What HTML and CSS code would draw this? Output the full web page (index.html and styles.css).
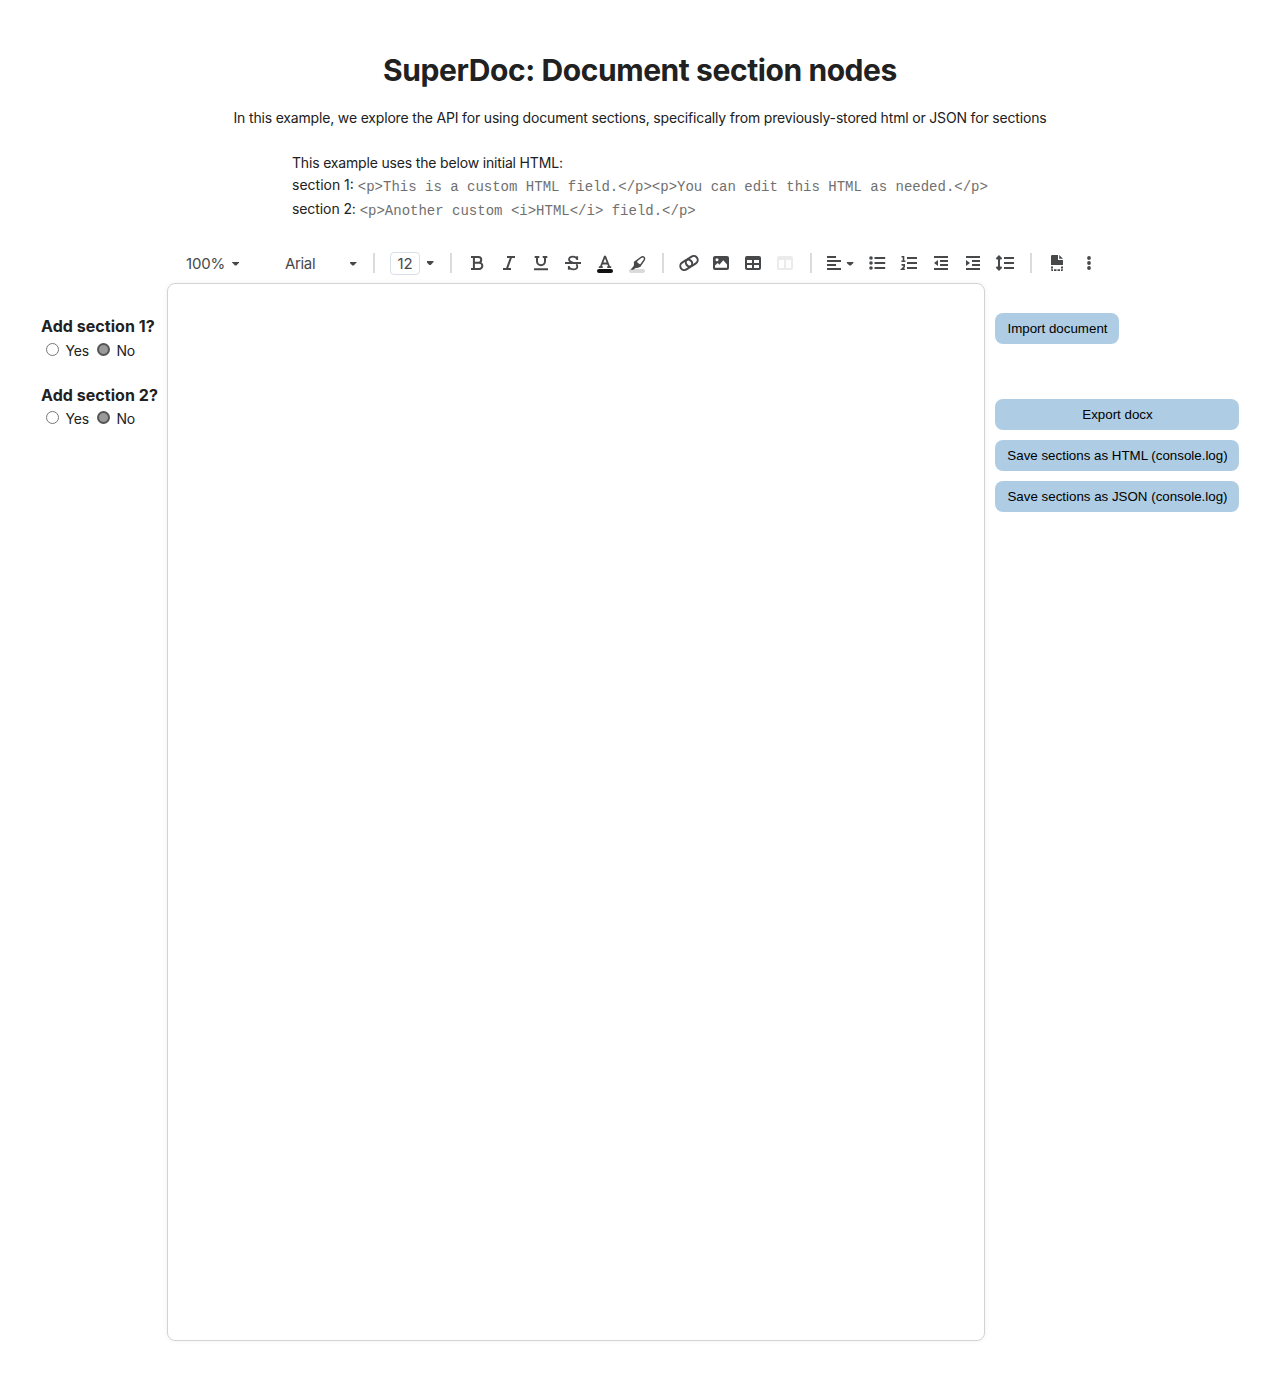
FILE: index.html
```html
<!DOCTYPE html>
<html lang="en">
<head>
<meta charset="utf-8">
<title>SuperDoc: Document section nodes</title>
<link rel="stylesheet" href="styles.css">
</head>
<body>
<header class="intro">
  <h1><span>SuperDoc: Document section nodes</span></h1>
  <p class="lead"><span>In this example, we explore the API for using document sections, specifically from previously-stored html or JSON for sections</span></p>
  <div class="sample">
    <div class="sample-line first">This example uses the below initial HTML:</div>
    <div class="sample-line">section 1: <code>&lt;p&gt;This is a custom HTML field.&lt;/p&gt;&lt;p&gt;You can edit this HTML as needed.&lt;/p&gt;</code></div>
    <div class="sample-line second">section 2: <code>&lt;p&gt;Another custom &lt;i&gt;HTML&lt;/i&gt; field.&lt;/p&gt;</code></div>
  </div>
</header>

<div class="toolbar">
  <div class="zoom-select"><span>100%</span><i class="caret"></i></div>
  <div class="font-select"><span>Arial</span><i class="caret"></i></div>
  <div class="sep"></div>
  <div class="size-select"><span class="size-box">12</span><i class="caret"></i></div>
  <div class="sep"></div>
  <svg class="tool" viewBox="0 0 32 32"><path d="M10 10h7.4a2.8 2.8 0 0 1 0 5.7H13.2M17.6 15.7h.6a3.1 3.1 0 0 1 0 6.3H10M12.9 10v12"/></svg>
  <svg class="tool" viewBox="0 0 32 32"><path d="M14 10h8M10 22h8M18.2 10l-4.4 12"/></svg>
  <svg class="tool" viewBox="0 0 32 32"><path d="M9.7 9.9h4.6M17.7 9.9h4.6M12 10v4.2a4 4 0 0 0 8 0V10M9 22.2h14"/></svg>
  <svg class="tool" viewBox="0 0 32 32"><path class="thin" d="M8 16h16M20.200 13V9.200M20 12c-.7-1.600-2-2.300-4-2.300-2.500 0-4 1-4 2.900 0 1.700 1.500 2.500 4.200 3.300M11.800 22.800V19M12 20.200c.7 1.400 2.200 2.100 4.200 2.100 2.600 0 4.100-1 4.100-2.900 0-.9-.3-1.600-1-2.200"/></svg>
  <svg class="tool" viewBox="0 0 32 32"><path class="thin" d="M9.800 20.200h4M18.200 20.200h4M11.700 20l4-10.300h.6l4 10.300M13.200 16.500h5.600"/><rect class="ink" x="8" y="22" width="16" height="4" rx="2"/></svg>
  <svg class="tool" viewBox="0 0 32 32"><rect class="marker" x="8" y="22" width="16" height="4" rx="2"/><path class="nib" d="M13.600 15.400l6.200-4.900c1.200-.9 2.400-1 3.200-.3.800.8.800 1.800.1 2.900l-4.300 6.200-2.900.7-1.900-1.900z"/><path class="fill" d="M13.400 14.800l2.300-1.700.9 2.600 2.700 1.700-1.500 2.800-3.600 1-1.800 1.600H9.500l3.200-3.800z"/></svg>
  <div class="sep"></div>
  <svg class="tool" viewBox="0 0 32 32"><g transform="rotate(-33 16 16)"><rect class="outline" x="6.400" y="12" width="12.600" height="8" rx="4"/><rect class="outline" x="13" y="12" width="12.600" height="8" rx="4"/></g></svg>
  <svg class="tool" viewBox="0 0 32 32"><rect class="fill" x="8" y="9" width="16" height="14" rx="2"/><circle class="cut" cx="12" cy="12.800" r="1.500"/><path class="cut" d="M10 20.800v-2.200l2.700-2.500 1.700 1.600 3.900-4.400 3.700 4.300v3.200z"/></svg>
  <svg class="tool" viewBox="0 0 32 32"><rect class="fill" x="8" y="9" width="16" height="14" rx="2"/><path class="cut" d="M10 13h5v3h-5zM17 13h5v3h-5zM10 18h5v3h-5zM17 18h5v3h-5z"/></svg>
  <svg class="tool off" viewBox="0 0 32 32"><rect class="fill" x="8" y="9" width="16" height="14" rx="2"/><path class="cut" d="M10 13h5v8h-5zM17 13h5v8h-5z"/></svg>
  <div class="sep"></div>
  <svg class="tool wide" viewBox="0 0 40 32"><path d="M6 10h9M6 14h14M6 18h9M6 22h14"/><path class="fill" d="M25.800 15h6.600v1l-2.600 2.500h-1.400L25.800 16z"/></svg>
  <svg class="tool" viewBox="0 0 32 32"><path d="M13.500 11h10.700M13.500 16h10.700M13.500 21h10.700"/><g class="fill"><circle cx="10" cy="11" r="1.800"/><circle cx="10" cy="16" r="1.800"/><circle cx="10" cy="21" r="1.800"/></g></svg>
  <svg class="tool" viewBox="0 0 32 32"><path d="M14 11h10M14 16h10M14 21h10"/><path class="numeral" d="M8.500 9.800h2v4M8.400 14.200h4M8.500 17.900h2.700v1.900l-2.300 2.400h3"/></svg>
  <svg class="tool" viewBox="0 0 32 32"><path d="M9 10h14M15 14h8M15 18h8M9 22h14"/><path class="fill" d="M13 13v6l-4-3z"/></svg>
  <svg class="tool" viewBox="0 0 32 32"><path d="M9 10h14M15 14h8M15 18h8M9 22h14"/><path class="fill" d="M9 13v6l4-3z"/></svg>
  <svg class="tool" viewBox="0 0 32 32"><path d="M15 11h10M15 16h10M15 21h10M10 11v10"/><path class="fill" d="M10 8l3.200 3.200-.9 1.400h-4.600l-.9-1.400zM10 24l3.200-3.200-.9-1.400h-4.600l-.9 1.400z"/></svg>
  <div class="sep"></div>
  <svg class="tool" viewBox="0 0 32 32"><path class="fill" d="M11.200 8H17v5h5v5H10V9.200A1.200 1.200 0 0 1 11.200 8zM18.200 8l3.800 3.800h-3.800zM10 19.500h2v2h-2zM20 19.500h2v2h-2zM10 22.300h2v1.700h-1.200l-.8-.8zM13 22.300h2.500v1.700H13zM16.500 22.300H19v1.700h-2.500zM20 22.300h2v.9l-.8.8H20z"/></svg>
  <svg class="tool" viewBox="0 0 32 32"><g class="fill"><circle cx="16" cy="11" r="1.900"/><circle cx="16" cy="16" r="1.900"/><circle cx="16" cy="21" r="1.900"/></g></svg>
</div>

<main class="workspace">
  <aside class="sections">
    <div class="question">
      <h2>Add section 1?</h2>
      <div class="choices"><label><input type="radio" name="s1"><span>Yes</span></label><label><input type="radio" name="s1" checked><span>No</span></label></div>
    </div>
    <div class="question">
      <h2>Add section 2?</h2>
      <div class="choices"><label><input type="radio" name="s2"><span>Yes</span></label><label><input type="radio" name="s2" checked><span>No</span></label></div>
    </div>
  </aside>
  <section class="document"></section>
  <aside class="actions">
    <button class="import">Import document</button>
    <button>Export docx</button>
    <button>Save sections as HTML (console.log)</button>
    <button>Save sections as JSON (console.log)</button>
  </aside>
</main>
</body>
</html>
```
FILE: styles.css
```css
* { box-sizing: border-box; }

body {
  margin: 0;
  height: 1373px;
  background: #fff;
  color: #212121;
  font: 14px/22px Inter, "Liberation Sans", sans-serif;
}

.intro { height: 247px; padding-top: 50px; }

h1 {
  margin: 0;
  font-size: 30px;
  line-height: 40px;
  font-weight: 700;
  letter-spacing: -.42px;
  text-align: center;
}

.lead { margin: 17px 0 0; text-align: center; letter-spacing: -.173px; }

.sample { width: 696px; margin: 23px auto 0; white-space: nowrap; }
.sample-line { height: 22px; letter-spacing: 0; }
.sample-line.first { letter-spacing: -.17px; }
.sample-line.second { margin-top: 2px; letter-spacing: -.09px; }

code {
  position: relative;
  top: 1px;
  color: #707070;
  font: 14px/20px "Liberation Mono", monospace;
  letter-spacing: 0;
}

.toolbar {
  display: flex;
  align-items: center;
  height: 32px;
  padding-left: 186px;
  color: #47484a;
}

.zoom-select, .font-select, .size-select {
  display: flex;
  align-items: center;
  font-size: 15px;
  letter-spacing: -.15px;
}
.zoom-select, .font-select { padding-top: 1px; }
.zoom-select { width: 99px; gap: 7px; }
.font-select { width: 79px; padding-right: 7.5px; justify-content: space-between; }
.font-select span { letter-spacing: -.35px; }
.size-select { width: 57px; padding-left: 6px; gap: 6.5px; }

.size-box {
  width: 30px;
  height: 23px;
  border: 1px solid #d8dfea;
  border-radius: 4px;
  text-align: center;
}

.caret {
  width: 7px;
  height: 4px;
  background: #47484a;
  clip-path: polygon(0 0, 100% 0, 100% 25%, 60% 100%, 40% 100%, 0 25%);
}

.sep { width: 20px; height: 20px; display: flex; justify-content: center; }
.sep::before { content: ""; width: 2px; background: #dbdbdb; }

.tool {
  width: 32px;
  height: 32px;
  flex: none;
  fill: none;
  stroke: #47484a;
  stroke-width: 2;
}
.tool.wide { width: 40px; }
.tool.off { opacity: .1; }
.tool .thin { stroke-width: 1.8; }
.tool .nib { stroke-width: 1.5; }
.tool .outline { stroke-width: 2; }
.tool .numeral { stroke-width: 1.6; }
.tool .fill { fill: #47484a; stroke: none; }
.tool .cut { fill: #fff; stroke: none; }
.tool .ink { fill: #111; stroke: none; }
.tool .marker { fill: #dadada; stroke: none; }

.workspace { display: flex; padding: 4px 0 0 41px; }

.sections { width: 126px; padding-top: 32px; }
.question { height: 69px; }

h2 {
  margin: 0;
  font-size: 16px;
  line-height: 22px;
  font-weight: 700;
  letter-spacing: .05px;
  white-space: nowrap;
}

.choices { display: flex; padding: 3px 0 0 5px; gap: 8px; letter-spacing: -.2px; }
.question + .question .choices { padding-top: 2px; }
.choices label { display: flex; align-items: flex-start; gap: 6.5px; }

input {
  appearance: none;
  width: 13px;
  height: 13px;
  margin: 3px 0 0;
  border: 1px solid #767676;
  border-radius: 50%;
  background: #fff;
}
input:checked { border: 2px solid #555; background: #999; }

.document {
  width: 818px;
  height: 1058px;
  border: 1px solid #d3d3d3;
  border-radius: 8px;
  box-shadow: 0 0 5px rgba(0, 0, 0, .06);
}

.actions {
  width: 244px;
  margin-left: 10px;
  padding-top: 30px;
  display: flex;
  flex-direction: column;
  gap: 10px;
}

button {
  height: 31px;
  padding: 0 0 0 1px;
  border: 0;
  border-radius: 8px;
  background: #aecde4;
  color: #000;
  font: 13.333px "Liberation Sans", Arial, sans-serif;
  white-space: nowrap;
}
.import { width: 124px; margin-bottom: 45px; }
```
